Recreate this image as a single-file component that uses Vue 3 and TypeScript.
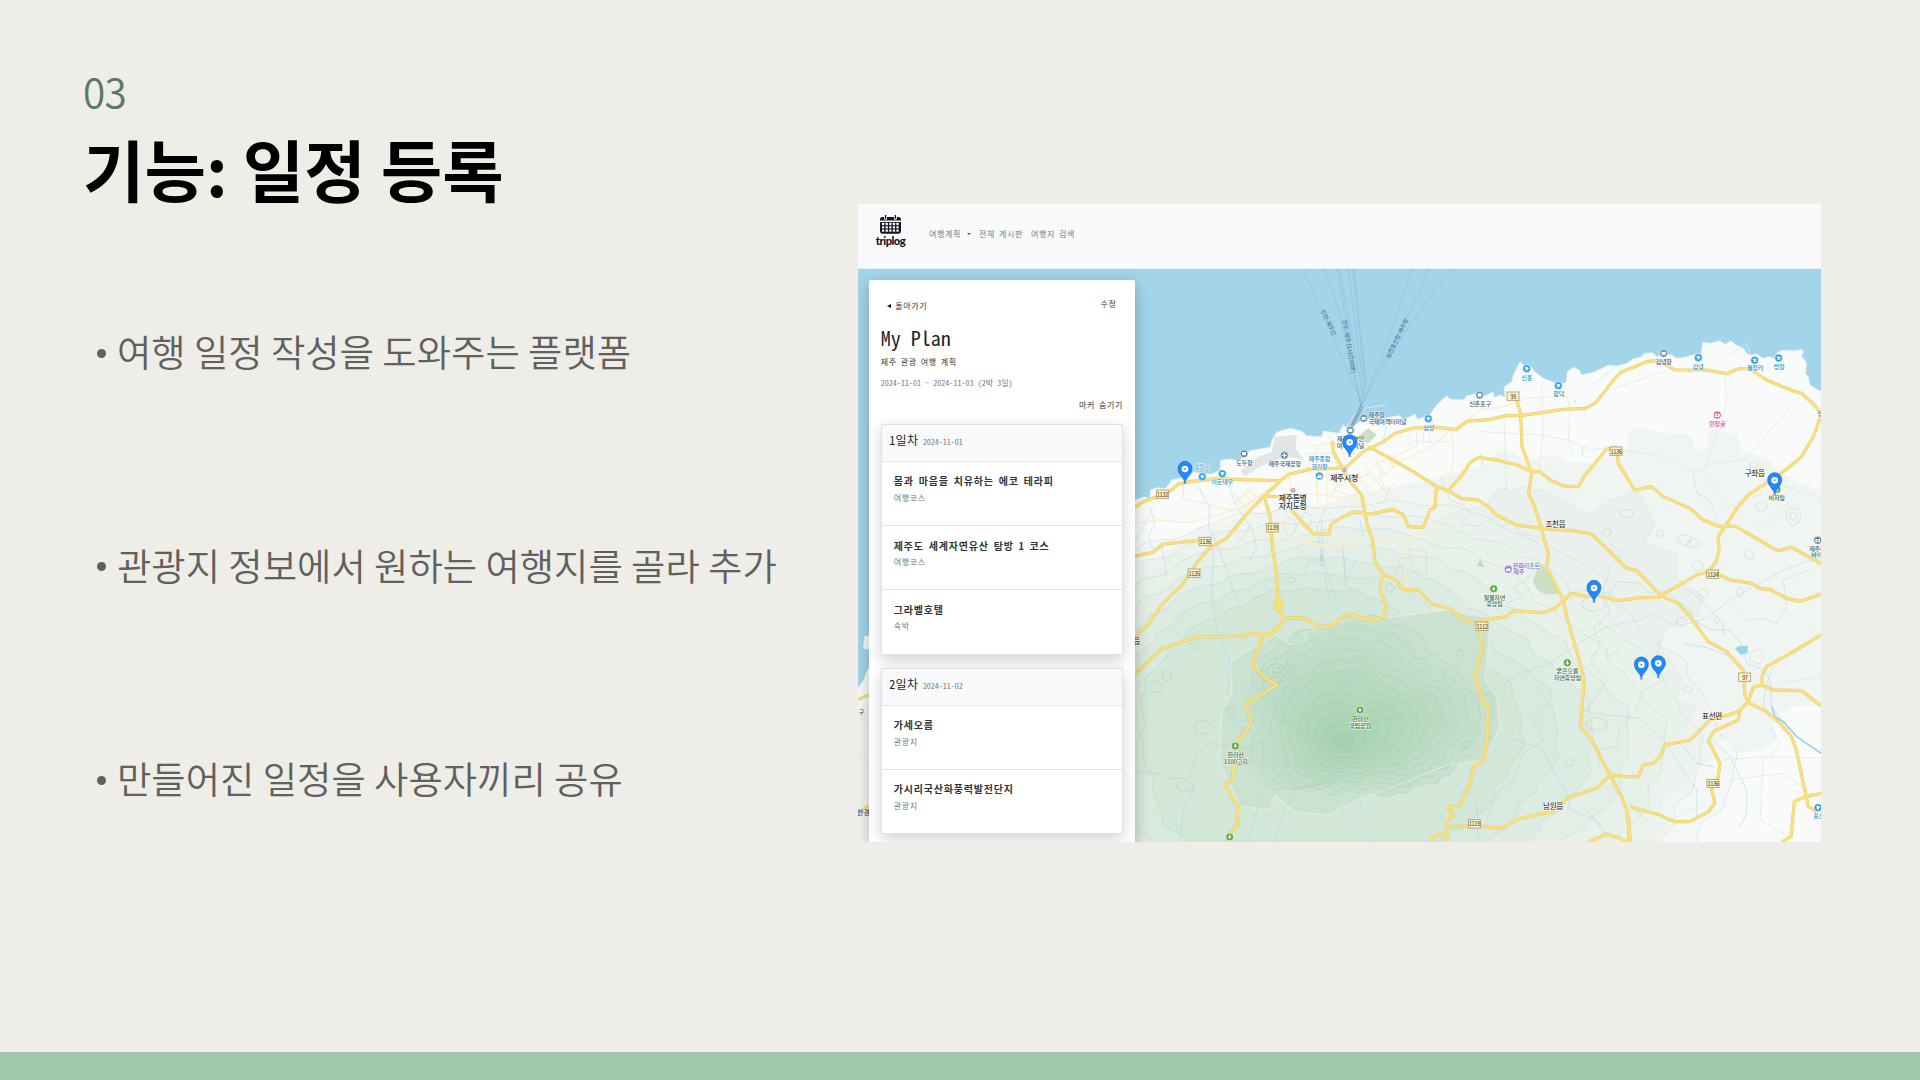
<script setup lang="ts">
interface PlanItem { title: string; kind: string }
interface PlanDay { label: string; date: string; items: PlanItem[] }
interface Blob { d: string; fill: string }
type Kind = 'port' | 'beach' | 'tree' | 'air' | 'stadium' | 'city' | 'cave' | 'hotel' | 'camera'
interface Poi { x: number; y: number; kind: Kind }
interface Label { x: number; y: number; t: string; c: string; s?: number; w?: number; r?: number }

const features: string[] = [
  '여행 일정 작성을 도와주는 플랫폼',
  '관광지 정보에서 원하는 여행지를 골라 추가',
  '만들어진 일정을 사용자끼리 공유',
]

const days: PlanDay[] = [
  {
    label: '1일차',
    date: '2024-11-01',
    items: [
      { title: '몸과 마음을 치유하는 에코 테라피', kind: '여행코스' },
      { title: '제주도 세계자연유산 탐방 1 코스', kind: '여행코스' },
      { title: '그라벨호텔', kind: '숙박' },
    ],
  },
  {
    label: '2일차',
    date: '2024-11-02',
    items: [
      { title: '가세오름', kind: '관광지' },
      { title: '가시리국산화풍력발전단지', kind: '관광지' },
    ],
  },
]

// Closed, slightly irregular ring used for contour lines
function ring(cx: number, cy: number, rx: number, ry: number, seed: number, amp = 0.05): string {
  const n = 160
  const pts: string[] = []
  for (let i = 0; i < n; i++) {
    const a = (i / n) * Math.PI * 2
    const k =
      1 +
      amp * Math.sin(3 * a + seed * 0.2) +
      amp * 0.6 * Math.sin(5 * a + 1 + seed * 0.3) +
      amp * 0.3 * Math.sin(13 * a + seed * 1.1) +
      amp * 0.22 * Math.sin(29 * a + seed * 1.9) +
      amp * 0.16 * Math.sin(47 * a + seed * 2.9)
    pts.push(`${(cx + Math.cos(a) * rx * k).toFixed(1)},${(cy + Math.sin(a) * ry * k).toFixed(1)}`)
  }
  return `M${pts.join('L')}Z`
}

function mix(a: number[], b: number[], t: number): string {
  return `rgb(${a.map((v, i) => Math.round(v + (b[i] - v) * t)).join(',')})`
}

const outer: Blob[] = []
for (let i = 0; i < 7; i++) {
  const t = i / 6
  outer.push({
    d: ring(640 - t * 60, 1440 - t * 20, 1130 - t * 560, 690 - t * 270, i, 0.04),
    fill: mix([236, 243, 238], [208, 230, 214], Math.pow(t, 1.3)),
  })
}
const park =
  'M440,1122L480,1155 530,1140 520,1120 590,1100 660,1075 780,1072 950,1050 1075,1075 1075,1160 1065,1260 1100,1310 1110,1400 1065,1500 945,1517 790,1580 680,1620 590,1665 490,1655 435,1605 420,1648 330,1640 270,1510 275,1350 305,1300 305,1200 340,1180Z'
const hills: Blob[] = []
for (let i = 0; i < 12; i++) {
  const t = i / 11
  hills.push({
    d: ring(690 - t * 50, 1355 + t * 85, 370 - t * 340, 265 - t * 245, i + 3, 0.075),
    fill: mix([199, 225, 206], [166, 210, 175], t),
  })
}

const knolls: string[] = [
  [440, 1232, 46, 36], [440, 1232, 28, 20], [440, 1232, 13, 9], [780, 982, 13, 13], [110, 1247, 14, 16],
  [80, 1280, 16, 18], [220, 1402, 26, 20], [190, 1158, 13, 8], [165, 1580, 26, 14], [305, 1352, 12, 10],
  [484, 960, 12, 7], [480, 800, 18, 26], [530, 780, 14, 22], [990, 1180, 9, 10], [1010, 1455, 10, 12],
  [1990, 768, 22, 26], [1990, 768, 10, 11], [1894, 740, 16, 14], [1870, 616, 12, 10], [1663, 840, 20, 16],
  [1490, 760, 20, 12], [1430, 818, 14, 12], [1880, 1190, 20, 20], [1720, 1000, 14, 13], [1654, 1084, 14, 12],
  [1760, 1082, 8, 8], [1830, 996, 10, 14], [1858, 884, 14, 14], [1704, 918, 16, 14], [1673, 1288, 13, 10],
  [1400, 1392, 32, 18], [1318, 1506, 12, 12], [1690, 850, 18, 12], [1390, 1030, 34, 24], [1590, 820, 10, 10],
].map(([x, y, a, b], i) => ring(x, y, a, b, i, 0.07))

const landPath =
  'M-20,735L15,720 40,711 60,715 62,690 80,683 108,685 125,660 165,652 190,636 215,640 245,642 270,630 272,601 300,597 325,603 345,588 360,572 420,562 427,538 440,516 480,505 515,513 530,527 575,530 580,513 625,520 640,494 650,505 668,500 690,485 720,478 745,482 775,472 810,467 820,480 855,462 862,478 900,466 912,445 930,425 950,408 962,418 1000,420 1010,408 1040,400 1055,398 1062,410 1080,400 1090,396 1092,412 1110,405 1125,412 1122,380 1145,365 1150,345 1160,325 1170,305 1180,316 1200,318 1215,335 1240,355 1262,364 1285,372 1308,368 1312,335 1330,322 1348,330 1355,345 1395,335 1435,315 1460,318 1490,310 1510,296 1530,292 1545,280 1568,278 1580,290 1600,283 1625,285 1640,294 1665,292 1690,284 1713,285 1718,247 1740,250 1770,242 1785,253 1802,243 1820,256 1840,265 1850,280 1860,285 1880,282 1900,295 1915,290 1935,295 1940,280 1955,270 1990,272 2018,268 2020,280 2013,285 2030,310 2026,340 2035,350 2040,375 2060,388 2080,394V1760H-820V1290L-800,1262 -785,1225 -778,1240V1170L-800,1165 -796,1128H-20Z'

const greenPath =
  'M-820,1350L-30,960 60,900 150,850 210,800 290,790 380,755 470,745 560,740 680,700 760,690 830,672 930,650 1080,610 1100,570 1120,565 1150,578 1170,590 1210,600 1240,586 1290,590 1310,604 1390,612 1400,600 1440,590 1480,590 1490,562 1500,510 1530,498 1545,505 1570,512 1600,515 1620,525 1670,520 1690,540 1690,560 1715,570 1735,560 1735,512 1760,508 1780,520 1820,520 1830,560 1840,575 1900,590 1920,600 1930,620 1960,640 2000,668 2075,690V1335L1990,1340 1930,1370 1940,1440 1900,1470 1830,1480 1800,1440 1760,1440 1740,1500 1700,1520 1660,1580 1600,1620 1590,1700 1560,1760H-820Z'

const green2 =
  'M-20,1000L120,890 300,870 500,850 700,800 790,790 860,820 960,760 1070,735 1100,690 1130,685 1140,696 1180,680 1210,690 1250,690 1270,705 1330,735 1345,755 1390,760 1440,720 1470,715 1500,690 1530,700 1560,760 1575,790 1560,820 1540,850 1640,880 1640,950 1720,1010 1700,1070 1610,1100 1590,1160 1660,1260 1640,1320 1700,1340 1640,1430 1590,1460 1540,1500 1500,1590 1380,1680 1330,1760H-20Z'

const majors: string[] = [
  'M15,742L40,725 80,710 115,697 145,672 180,664 215,662 250,656 340,659 450,662 478,642 540,628 620,625 650,620 700,575 760,545 795,520 850,504 920,502 978,508 1012,484 1080,478 1130,467 1172,467 1240,457 1300,448 1365,445 1395,430 1420,400 1450,360 1475,335 1520,318 1550,305 1575,302 1600,310 1635,330 1730,330 1790,341 1830,325 1860,327 1910,360 1990,393 2015,400 2050,432 2070,455 2070,475 2050,530 2015,590 1960,635 1900,675 1855,705 1820,745 1785,800 1765,830 1767,875 1758,905 1735,935 1700,945 1640,980 1592,1006',
  'M15,888L70,877 100,852 180,844 235,840',
  'M15,1130L50,1100 95,1035 160,970 200,910 240,862 290,835 350,762 400,710 450,665',
  'M400,710L480,708M403,710L420,770 428,870 438,925 443,985 443,1040 465,1078 430,1115 400,1130',
  'M15,1242L95,1166 200,1131 330,1129 378,1118 415,1128 440,1110 465,1075 515,1073 575,1102 605,1095 655,1061 725,1081 760,1070 770,1040 752,995 752,965 762,945',
  'M400,1128L372,1195 368,1222 382,1228 400,1250 440,1275 400,1300 380,1315 360,1318 348,1340 362,1368 362,1392 320,1450 318,1520 308,1535 310,1558 285,1575 305,1610 328,1645 318,1665 325,1690 300,1720 288,1746',
  'M608,545L610,575 632,615 660,665 695,705 705,760 712,795 728,840 735,905 762,945 800,962 815,988 865,990 905,1032 960,1046 1005,1080 1045,1095 1058,1160 1035,1250 1055,1315 1075,1345 1072,1430 1062,1500 1030,1520 1020,1570 990,1638 952,1642 970,1668 948,1685 950,1720 905,1732 900,1750M948,1712L955,1750',
  'M485,750L520,790 545,815 550,822 598,822 602,795 630,775 670,755 720,762 790,748 820,765 835,800 880,802 900,750 915,742 918,690 922,680',
  'M715,560L780,595 850,635 920,680 955,692 995,716 1045,720 1075,740 1100,765 1160,795 1240,806 1330,812 1385,822 1430,866 1490,925 1520,932 1592,1006 1645,1030 1680,1070 1735,1145 1790,1175 1840,1230 1845,1310 1860,1330 1910,1355 1950,1390 1985,1430 2000,1475 2020,1570 2035,1640 2060,1655',
  'M955,692L1000,640 1020,608 1045,592 1110,602 1160,615 1205,635 1230,635 1260,660 1300,678 1345,680 1365,645 1430,568 1458,562 1465,610 1514,690 1565,680 1600,710 1680,745 1720,780 1770,800 1815,798 1870,830 1920,860 1945,872 1985,862 2073,911',
  'M1160,420L1172,460 1176,560 1205,640 1196,700 1212,735 1230,790 1243,840 1255,880 1250,920 1300,1020 1310,1070 1345,1190 1362,1260 1352,1400 1385,1440 1440,1545 1475,1610 1490,1650 1502,1750M1490,1650L1498,1690 1495,1750',
  'M1045,1082L1130,1070 1150,1052 1240,1058 1275,1045 1325,1000 1370,1010 1400,1005 1470,1022 1530,1013 1592,1012',
  'M1770,945L1800,960 1865,970 1890,985 1920,988 1970,1015 2010,1024 2073,1003',
  'M2073,1125L1990,1175 1910,1220 1897,1245 1895,1275 1930,1290 2015,1292 2073,1337M1895,1275L1870,1282 1855,1325 1830,1350 1825,1380 1750,1415 1735,1442 1770,1510 1765,1550 1745,1590 1755,1630 1735,1655 1680,1685 1640,1685 1620,1680 1590,1665 1500,1640',
  'M1835,1350L1795,1365 1740,1380 1700,1420 1680,1440 1605,1455 1590,1490 1570,1510 1540,1515 1525,1550 1490,1550 1440,1545 1400,1585 1310,1615 1270,1655 1170,1675 1110,1705 1050,1698 948,1700',
  'M1375,1746L1430,1722 1470,1735 1490,1745M2073,1600L2020,1612 1993,1625 1983,1730 1955,1746',
  'M-816,1318L-720,1280M-816,1655L-735,1615',
  'M445,1010L458,1030 440,1050 434,1035 446,1020 452,1045',
]

const minors: string[] = [
  'M15,790L80,780 180,788 330,745M160,665L160,715 300,750 330,745 450,665M290,832L450,830 560,855 720,845 850,835 920,795 965,730M320,715L370,760M340,700L390,745M480,650L480,745 430,870M560,640L565,740 500,840M520,700L640,712 750,745 820,765M580,545L545,600 520,640M540,560L640,545M600,530L620,620M650,720L700,690 820,600 900,565 965,505M680,640L720,705 800,670M965,505L970,600 955,690M530,580L700,580M560,600L560,700M590,640L590,745',
  'M520,840L575,860 760,845 820,840 830,980M750,640L775,730M720,620L860,560M740,600L760,640M770,580L790,625',
  'M1050,450L1140,435 1180,415 1265,410 1310,408 1320,445M990,500L1050,450',
  'M310,700L350,740M360,690L400,735M300,735L360,690M330,755L400,700M600,560L690,560M620,680L720,640M610,690L700,720M630,650L600,720M700,610L760,690',
]

const locals: string[] = [
  'M15,850L90,700M90,960L130,870M40,930L100,1000M840,520L840,560M900,505L900,550M850,545L960,545M860,515L860,556M880,510L880,550',
  'M1050,515L1230,525 1310,540 1390,570 1440,562 1500,575 1580,585 1620,600 1690,635 1760,610 1850,600 1870,580',
  'M1235,375L1240,520 1225,640M1320,445L1315,540 1330,580M1720,630L1790,740 1900,700M1720,630L1760,520 1770,510 1790,420 1785,341M2010,410L1930,500 1880,560 1830,600M2073,625L2000,700 1930,780 1870,800M1122,480L1130,700M1790,290L1850,250 1880,330M1440,390L1600,335M1380,380L1460,320M1900,660L2000,690 2073,715',
  'M1950,1270L2073,1250M1780,1500L1900,1490 2073,1495M1900,1490L1890,1680 1990,1740M1800,1560L1960,1540 2073,1620M1920,1490L1950,1450 1920,1400M1560,1760L1600,1690 1700,1640',
  'M-816,1370C-790,1380-770,1420-740,1440M-816,1480L-720,1560',
]

const streams: string[] = [
  'M60,745L75,790 55,830 70,870 95,850 110,950M200,670L240,745 235,800 260,850 290,930 330,1055M290,660L320,740 360,800 320,850M250,870L245,1010 265,1130 300,1200 305,1240 290,1300',
  'M360,790L380,860 360,900M590,740L560,800 575,880 605,980 625,1060M575,780L580,920 540,900 520,940M690,780L700,830 740,880M640,860L645,980M680,900L650,960M570,890L600,1020M780,680L760,730M770,500L760,540 775,560M640,880L650,970 710,1055',
  'M665,1090L680,1150 670,1200 682,1260 675,1310 640,1380 640,1410M305,1240L380,1285 500,1300 540,1320 590,1370M440,1275L520,1310 520,1360 560,1410M430,1290L460,1365M300,1380L380,1385 420,1410',
  'M480,1490L440,1550 400,1590 370,1680 355,1746M600,1490L620,1630 690,1710 730,1746M650,1500L670,1550 700,1660M510,1580L470,1640 430,1746M195,1580L160,1650 150,1746',
  'M945,1518L975,1570 1000,1590 1040,1610 1045,1746M930,1665L940,1690M1130,1430L1240,1470 1270,1530 1310,1600 1320,1650 1400,1680 1440,1746',
  'M1350,1350L1430,1365 1530,1375 1600,1440 1640,1500 1700,1590 1700,1670M1360,1640L1410,1700M1800,1490L1850,1590 1850,1660 1830,1700M1750,1440L1800,1490M1660,1460L1700,1510 1750,1520M1490,1620L1560,1690',
  'M1300,1010L1350,990 1440,1000 1460,965 1530,970 1560,1000 1600,990 1680,1050 1690,1080 1740,1110 1800,1110 1840,1160 1850,1210 1900,1230 1920,1260 1925,1340 1960,1390M1660,985L1690,1000 1780,1090 1780,1130M1660,1150L1740,1165 1800,1190M1930,1220L1910,1270 1900,1330 1920,1380M1430,1190L1470,1170M1380,1190L1400,1180',
  'M1050,580L1060,620M1360,560L1355,590M1335,420L1335,432M-770,1325L-735,1325',
]

// Faint contour lines of the eastern lowlands
const folds: string[] = [
  'M930,650L960,720 1000,735 1020,760 990,790 1040,800 1080,780 1110,800 1150,790 1180,830 1230,850',
  'M1230,900L1190,960 1150,980 1180,1010 1130,1030M1440,850L1480,880 1440,920 1420,990 1440,1060 1390,1100 1410,1160 1380,1210 1430,1260 1400,1310 1370,1350',
  'M1590,1130L1580,1200 1600,1260 1540,1290 1520,1350 1470,1400 1460,1460 1400,1470 1410,1520',
  'M1220,1290L1260,1330 1210,1380 1240,1440 1180,1480 1150,1560 1100,1600 1070,1680',
  'M1690,640L1700,700 1740,720 1760,780M1830,1060L1850,1080 1900,1075 1940,1090 1970,1040 1960,960 2040,930',
]

const adminLines: string[] = [
  'M15,1535L80,1540 120,1555 180,1555 205,1475 240,1450 300,1460 360,1465 400,1440 450,1475 490,1450 600,1440 640,1415 720,1370 800,1375 910,1360 960,1320 1060,1310 1170,1240 1260,1210 1330,1160 1430,1100 1530,1080 1575,1062 1640,1100 1730,1075 1800,1020 1960,930 2073,890',
]

const ferries: string[] = [
  'M520,27L695,430', 'M580,27C640,140 650,300 695,430', 'M622,27L690,430', 'M628,27L700,410', 'M655,27L702,400',
  'M668,27L706,380 690,430', 'M672,27L708,370', 'M845,27C800,180 740,330 695,430', 'M898,27C850,150 740,330 690,445', 'M962,27C860,160 740,340 695,440',
]

const shields: { x: number; y: number; n: string }[] = [
  { x: 97, y: 703, n: '1132' }, { x: 427, y: 804, n: '1139' }, { x: 225, y: 845, n: '1136' }, { x: 192, y: 940, n: '1135' },
  { x: 1056, y: 1099, n: '1112' }, { x: 1149, y: 409, n: '99' }, { x: 1458, y: 574, n: '1136' }, { x: 1748, y: 943, n: '1124' },
  { x: 1844, y: 1252, n: '97' }, { x: 1749, y: 1571, n: '1136' }, { x: 1033, y: 1692, n: '1119' },
]

const blue = '#2a8fc9'
const slate = '#3f6076'
const dark = '#444'
const forest = '#3f6b3a'

const labels: Label[] = [
  { x: 216, y: 628, t: '알작지', c: '#62a9d2' },
  { x: 276, y: 673, t: '이호테우', c: blue },
  { x: 343, y: 614, t: '도두항', c: slate },
  { x: 464, y: 618, t: '제주국제공항', c: slate },
  { x: 568, y: 604, t: '제주종합', c: blue },
  { x: 568, y: 626, t: '경기장', c: blue },
  { x: 642, y: 663, t: '제주시청', c: '#333', s: 23.5 },
  { x: 488, y: 723, t: '제주특별', c: '#333', s: 23.5 },
  { x: 488, y: 748, t: '자치도청', c: '#333', s: 23.5 },
  { x: 740, y: 470, t: '제주항', c: slate },
  { x: 772, y: 491, t: '국제여객터미널', c: slate },
  { x: 661, y: 544, t: '제주항연안', c: slate },
  { x: 661, y: 565, t: '여객터미널', c: slate },
  { x: 896, y: 509, t: '삼양', c: blue },
  { x: 1050, y: 438, t: '신촌포구', c: slate },
  { x: 1190, y: 359, t: '신흥', c: blue },
  { x: 1286, y: 409, t: '함덕', c: blue },
  { x: 1601, y: 313, t: '김녕항', c: slate },
  { x: 1704, y: 327, t: '김녕', c: blue },
  { x: 1875, y: 331, t: '월정리', c: blue },
  { x: 1947, y: 326, t: '평원', c: blue },
  { x: 1762, y: 498, t: '만장굴', c: '#d64f96' },
  { x: 1874, y: 648, t: '구좌읍', c: dark, s: 22.5 },
  { x: 1940, y: 721, t: '비자림', c: forest },
  { x: 1276, y: 800, t: '조천읍', c: dark, s: 22.5 },
  { x: 1189, y: 924, t: '한화리조트', c: '#7a67c4' },
  { x: 1166, y: 943, t: '제주', c: '#7a67c4' },
  { x: 1093, y: 1019, t: '절물자연', c: forest },
  { x: 1093, y: 1039, t: '휴양림', c: forest },
  { x: 1312, y: 1239, t: '붉은오름', c: forest },
  { x: 1312, y: 1260, t: '자연휴양림', c: forest },
  { x: 690, y: 1383, t: '한라산', c: forest },
  { x: 690, y: 1403, t: '국립공원', c: forest },
  { x: 317, y: 1491, t: '한라산', c: forest },
  { x: 317, y: 1511, t: '1100고지', c: forest },
  { x: 1746, y: 1376, t: '표선면', c: dark, s: 22.5 },
  { x: 1269, y: 1646, t: '남원읍', c: dark, s: 22.5 },
  { x: 2062, y: 872, t: '제주레', c: slate },
  { x: 2060, y: 892, t: '바이', c: slate },
  { x: 2066, y: 1675, t: '표선', c: blue },
  { x: 2078, y: 467, t: '평대', c: blue },
  { x: 20, y: 1152, t: '읍', c: dark, s: 22.5 },
  { x: -806, y: 1363, t: '구', c: slate },
  { x: -800, y: 1666, t: '한경', c: dark, s: 22 },
  { x: -760, y: 1150, t: '비양', c: slate },
  { x: 590, y: 190, t: '인천-제주간', c: '#4c7f99', s: 17, r: 65 },
  { x: 651, y: 260, t: '진도-제주 (1시간30분)', c: '#4c7f99', s: 17.5, r: 80 },
  { x: 807, y: 238, t: '삼천포신항-제주항', c: '#4c7f99', s: 17, r: -64 },
]

const pois: Poi[] = [
  { x: 217, y: 650, kind: 'beach' }, { x: 277, y: 641, kind: 'beach' }, { x: 342, y: 581, kind: 'port' },
  { x: 463, y: 586, kind: 'air' }, { x: 568, y: 648, kind: 'stadium' }, { x: 643, y: 630, kind: 'city' },
  { x: 489, y: 691, kind: 'city' }, { x: 701, y: 475, kind: 'port' }, { x: 661, y: 511, kind: 'port' },
  { x: 895, y: 476, kind: 'beach' }, { x: 1049, y: 405, kind: 'port' }, { x: 1190, y: 326, kind: 'beach' },
  { x: 1285, y: 377, kind: 'beach' }, { x: 1601, y: 280, kind: 'port' }, { x: 1705, y: 293, kind: 'beach' },
  { x: 1874, y: 301, kind: 'beach' }, { x: 1946, y: 294, kind: 'beach' }, { x: 1762, y: 465, kind: 'cave' },
  { x: 1941, y: 688, kind: 'tree' }, { x: 1135, y: 928, kind: 'hotel' }, { x: 1091, y: 986, kind: 'tree' },
  { x: 1312, y: 1208, kind: 'tree' }, { x: 690, y: 1350, kind: 'tree' }, { x: 316, y: 1458, kind: 'tree' },
  { x: 299, y: 1731, kind: 'tree' }, { x: 2063, y: 841, kind: 'camera' }, { x: 2064, y: 1643, kind: 'beach' },
]
const poiColor: Record<Kind, string> = {
  port: '#5e8ba5', beach: '#2b9fe0', tree: '#5da544', air: '#5e8ba5', stadium: '#2b9fe0',
  city: '#8b8574', cave: '#dc5fa3', hotel: '#8b78d6', camera: '#5f7c90',
}

const pins = [
  { x: 165, y: 628 }, { x: 659, y: 548 }, { x: 1934, y: 662 },
  { x: 1392, y: 985 }, { x: 1534, y: 1215 }, { x: 1585, y: 1211 },
]
</script>

<template>
  <main class="slide">
    <header class="heading">
      <div class="number">03</div>
      <h1>기능: 일정 등록</h1>
    </header>

    <div class="body">
      <ul class="features">
        <li v-for="f in features" :key="f"><span class="dot"></span>{{ f }}</li>
      </ul>

      <section class="app">
        <nav class="nav">
          <div class="logo">
            <svg class="cal" viewBox="0 0 64 58">
              <path d="M8 6h48a8 8 0 0 1 8 8v3H0v-3a8 8 0 0 1 8-8z" fill="#15151f" />
              <path d="M0 21h64v28a8 8 0 0 1-8 8H8a8 8 0 0 1-8-8z" fill="#15151f" />
              <g fill="#f8f9fb">
                <template v-for="r in 3" :key="r">
                  <rect v-for="c in 5" :key="c" :x="c * 11 - 5" :y="r * 10 + 14" width="7" height="7" rx="1" />
                </template>
              </g>
              <path d="M17 2v9M47 2v9" stroke="#f8f9fb" stroke-width="9" stroke-linecap="round" />
              <path d="M17 1v9M47 1v9" stroke="#15151f" stroke-width="4" stroke-linecap="round" />
            </svg>
            <span class="brand">triplog</span>
          </div>
          <span class="link">여행계획</span><i class="caret"></i>
          <span class="link second">전체 게시판</span>
          <span class="link">여행지 검색</span>
        </nav>

        <div class="stage">
          <svg class="map" viewBox="-816 27 2889 1719" preserveAspectRatio="none">
            <defs>
              <clipPath id="land"><path :d="landPath" /></clipPath>
            </defs>
            <rect x="-816" y="27" width="2889" height="1719" fill="#a3d5ea" />
            <path :d="landPath" fill="#f9fafa" stroke="#e3eef2" stroke-width="2" />
            <g clip-path="url(#land)">
              <path :d="greenPath" fill="#f0f5f2" />
              <path :d="green2" fill="#eaf1ec" stroke="#dbe5dd" stroke-width="2" />
              <path v-for="(b, i) in outer" :key="'o' + i" :d="b.d" :fill="b.fill" class="contour" :fill-opacity="i < 2 ? 0.4 : 0.75" />
              <path :d="park" fill="#cbe2d1" />
              <path v-for="(b, i) in hills" :key="'h' + i" :d="b.d" :fill="b.fill" class="contour" />
              <path v-for="(d, i) in knolls" :key="'k' + i" :d="d" class="knoll" />
              <path v-for="(d, i) in folds" :key="'fo' + i" :d="d" class="knoll" />
            </g>
            <path d="M332,633L385,590 425,575 435,530 500,525 497,565 522,600 470,590 400,615 345,648Z" fill="#e3e4e6" />
            <path d="M690,525L715,505 740,525 715,550 692,540Z" fill="#c9dfc0" />
            <path d="M1209,960L1230,905 1262,945 1290,1000Q1220,1015 1209,960Z" fill="#cbe0c3" />
            <path d="M1815,1165l10-6 28-2v22l-22 6z" fill="#9dd2ea" />
            <path d="M1040,920l10-22 14 22zM567,905l4-24 8 0v24z" fill="#c3ddb9" />
            <path d="M630,520L640,495M650,500L690,440M700,445L768,435" stroke="#dbe8ee" stroke-width="3" fill="none" />
            <path v-for="(d, i) in adminLines" :key="'a' + i" :d="d" class="admin" />
            <path v-for="(d, i) in streams" :key="'s' + i" :d="d" class="stream" />
            <path d="M1925,1340L1935,1370 1960,1385 2000,1430 2073,1480" class="river" />
            <path v-for="(d, i) in locals" :key="'l' + i" :d="d" class="local" />
            <path v-for="(d, i) in minors" :key="'m' + i" :d="d" class="minor" />
            <path :d="park" class="park" />
            <path d="M835,868l54,6v70l-40-10zM830,895h-20l-12,50 30,25" class="base" />
            <path v-for="(d, i) in majors" :key="'c' + i" :d="d" class="casing" />
            <path v-for="(d, i) in majors" :key="'r' + i" :d="d" class="road" />
            <path v-for="(d, i) in ferries" :key="'f' + i" :d="d" class="ferry" />
            <path d="M695,430L662,500M698,440L665,505" stroke="#7f9fba" stroke-width="4" fill="none" />

            <g v-for="(s, i) in shields" :key="'sh' + i" :transform="`translate(${s.x} ${s.y})`">
              <rect x="-18" y="-13" width="36" height="25" fill="#fbf4cb" stroke="#a8966c" stroke-width="2.4" />
              <text y="7" class="shield">{{ s.n }}</text>
            </g>

            <g v-for="(p, i) in pois" :key="'p' + i" :transform="`translate(${p.x} ${p.y})`">
              <circle :r="p.kind === 'city' ? 8 : 12" :fill="poiColor[p.kind]" stroke="#fff" stroke-width="2" />
              <rect v-if="p.kind === 'port'" x="-6" y="-5" width="12" height="10" rx="2" fill="#fff" />
              <path v-else-if="p.kind === 'beach'" d="M-7-1Q-2-9 5-3L7 2 2 0 4 5H-5L-1 0Z" fill="#fff" />
              <path v-else-if="p.kind === 'tree'" d="M0-8L5 3H1V7H-1V3H-5Z" fill="#fff" />
              <path v-else-if="p.kind === 'air'" d="M-7 0H7M0-7V7" stroke="#fff" stroke-width="3.5" />
              <path v-else-if="p.kind === 'stadium' || p.kind === 'hotel'" d="M-7 6V-1H-3V-5H0V-1L3-5 7 0V6Z" fill="#fff" />
              <circle v-else-if="p.kind === 'city'" r="3.6" fill="#8b8574" stroke="#fff" stroke-width="2.4" />
              <g v-else>
                <rect x="-7" y="-4" width="14" height="10" rx="2" fill="#fff" />
                <circle r="2.6" cy="1" :fill="poiColor[p.kind]" />
              </g>
            </g>

            <text
              v-for="(l, i) in labels" :key="'t' + i" :x="l.x" :y="l.y" :fill="l.c" :font-size="l.s ?? 18.5"
              :transform="l.r ? `rotate(${l.r} ${l.x} ${l.y})` : undefined" class="label" :class="{ sea: l.r }"
            >{{ l.t }}</text>

            <g v-for="(p, i) in pins" :key="'pin' + i" :transform="`translate(${p.x} ${p.y})`">
              <ellipse cy="41" rx="5" ry="3" fill="#777" opacity=".6" />
              <path d="M0 40C-3 24-21 16-21-3A21 21 0 0 1 21-3C21 16 3 24 0 40Z" fill="#2188ff" stroke="#1a66c9" stroke-width="2" />
              <circle r="10" cy="-1" fill="#fff" />
              <circle r="3" cy="-1" fill="#5b93cf" />
            </g>
          </svg>

          <aside class="panel">
            <div class="tools ko"><span class="back"><i></i>돌아가기</span><span class="edit">수정</span></div>
            <h2>My Plan</h2>
            <p class="desc ko">제주 관광 여행 계획</p>
            <p class="period">2024-11-01 ~ 2024-11-03 (2박 3일)</p>
            <p class="toggle ko">마커 숨기기</p>
            <article v-for="d in days" :key="d.label" class="day">
              <h3>{{ d.label }} <small>{{ d.date }}</small></h3>
              <div v-for="it in d.items" :key="it.title" class="item ko">
                <strong>{{ it.title }}</strong>
                <span>{{ it.kind }}</span>
              </div>
            </article>
          </aside>
        </div>
      </section>
    </div>

    <footer class="bar"></footer>
  </main>
</template>

<style>
body { background: #eeede8; }
</style>

<style scoped>
* { box-sizing: border-box; margin: 0; padding: 0; }
.slide {
  width: 1920px; height: 1080px; overflow: hidden; display: flex; flex-direction: column;
  background: #eeede8; font-family: "Noto Sans CJK KR", sans-serif;
}
.heading { height: 204px; padding: 61px 0 0 83px; flex: none; }
.number { font-size: 40.5px; line-height: 60px; font-weight: 350; color: #5b7866; letter-spacing: -0.8px; }
h1 { font-size: 66.8px; line-height: 92px; margin-top: 1px; font-weight: 700; color: #000; white-space: nowrap; }
.body { display: flex; flex: none; height: 848px; }
.features { width: 858px; padding: 120px 0 0 97px; list-style: none; }
.features li {
  display: flex; align-items: center; height: 54px; margin-bottom: 159.5px; white-space: nowrap;
  font-size: 37.33px; line-height: 54px; font-weight: 350; color: #60605d;
}
.dot { width: 9px; height: 9px; border-radius: 50%; background: #60605d; margin-right: 11px; margin-top: 4px; }

.app { width: 963px; height: 638px; overflow: hidden; font-family: "Noto Sans Mono CJK KR", "Noto Sans CJK KR", monospace; }
.nav { height: 65px; background: #f8f9fb; display: flex; align-items: flex-start; padding-left: 17px; border-bottom: 1px solid #e9eef2; }
.logo { width: 31px; display: flex; flex-direction: column; align-items: center; padding-top: 11px; margin-right: 23px; }
.cal { width: 21px; height: 19px; display: block; }
.brand { font: 900 11.2px/12px "Lato", sans-serif; letter-spacing: -0.5px; color: #15151f; margin-top: 1px; }
.link { font-size: 8px; line-height: 12px; margin-top: 24px; color: #7b7d80; white-space: nowrap; letter-spacing: 0.64px; word-spacing: -0.64px; }
.ko { letter-spacing: 0.08em; word-spacing: -0.08em; }
.caret { width: 0; height: 0; border: 2px solid transparent; border-top: 2.5px solid #555; border-bottom: 0; margin: 28.5px 8.5px 0 5.5px; }
.second { margin-right: 8px; }

.stage { position: relative; height: 573px; overflow: hidden; }
.map { display: block; width: 963px; height: 573px; }
.contour { stroke: #8fae96; stroke-opacity: 0.35; stroke-width: 1.6; }
.knoll { fill: none; stroke: #8fa696; stroke-opacity: 0.3; stroke-width: 2; }
.stream, .river, .local, .minor, .park, .admin, .casing, .road, .ferry, .base { fill: none; stroke-linejoin: round; }
.stream { stroke: #a9d8ea; stroke-width: 2; stroke-opacity: 0.8; }
.river { stroke: #9bd0e8; stroke-width: 5; }
.local { stroke: #e6e6e4; stroke-width: 2.4; }
.minor { stroke: #f7efd2; stroke-width: 4; }
.park { stroke: #fff; stroke-width: 3.4; stroke-dasharray: 4 5; stroke-opacity: 0.75; }
.admin { stroke: #b9c4bb; stroke-width: 2; stroke-dasharray: 8 2; stroke-opacity: 0.7; }
.base { stroke: #dccdb0; stroke-width: 2.5; stroke-dasharray: 5 3; }
.casing { stroke: #e5cb74; stroke-width: 9.5; }
.road { stroke: #fce07a; stroke-width: 6.5; }
.ferry { stroke: #7b9fbd; stroke-width: 2; stroke-dasharray: 3 4; }
.shield { font: 500 17px "Noto Sans CJK KR", sans-serif; letter-spacing: -1.4px; text-anchor: middle; fill: #665836; }
.label {
  font-family: "Noto Sans CJK KR", sans-serif; font-weight: 500; text-anchor: middle; letter-spacing: -0.8px;
  paint-order: stroke; stroke: #fff; stroke-width: 3px; stroke-opacity: 0.85; stroke-linejoin: round;
}
.label.sea { stroke: none; letter-spacing: -0.2px; }

.panel {
  position: absolute; left: 10.7px; top: 11.4px; width: 266.3px; height: 620px; padding: 0 12px;
  background: #fff; border-radius: 2px 2px 0 0; box-shadow: 0 4px 16px rgba(0, 0, 0, 0.26); color: #33363a;
}
.tools { display: flex; justify-content: space-between; align-items: flex-start; font-size: 8px; line-height: 12px; height: 45.5px; padding: 17.5px 6.5px 0 6px; }
.back { display: flex; align-items: center; padding-top: 2px; }
.back i { border: 2px solid transparent; border-right: 4px solid #111; border-left: 0; margin-right: 4.5px; }
h2 { font-size: 20px; line-height: 24px; font-weight: 400; color: #212529; }
.desc { font-size: 8px; line-height: 12px; margin-top: 6.5px; }
.period { font-size: 8px; line-height: 12px; margin-top: 9px; color: #74797e; letter-spacing: 0.04px; white-space: nowrap; }
.toggle { font-size: 8px; line-height: 12px; margin-top: 10px; text-align: right; }
.day {
  width: 242px; margin: 13px 0 0; border: 1px solid #dfe3e8; background: #fff;
  box-shadow: 0 5px 14px rgba(0, 0, 0, 0.18);
}
h3 { height: 36.5px; padding: 6px 0 0 7.5px; font-size: 12px; line-height: 18px; font-weight: 400; letter-spacing: 0.4px; background: #f8f9fb; border-bottom: 1px solid #e4e8ec; color: #212529; }
h3 small { font-size: 8px; color: #74797e; margin-left: -2px; letter-spacing: 0; }
.item { height: 64.3px; padding: 11.5px 0 0 12px; display: flex; flex-direction: column; border-bottom: 1px solid #dfe3e8; }
.item:last-child { height: 63.6px; border-bottom: 0; }
.item strong { font-size: 10px; line-height: 15px; font-weight: 700; letter-spacing: 0.08em; word-spacing: -0.08em; color: #303338; white-space: nowrap; }
.item span { font-size: 8px; line-height: 12px; margin-top: 3.5px; letter-spacing: 0.08em; color: #74797e; }
.bar { height: 28px; flex: none; background: #a0c9ac; }
</style>
